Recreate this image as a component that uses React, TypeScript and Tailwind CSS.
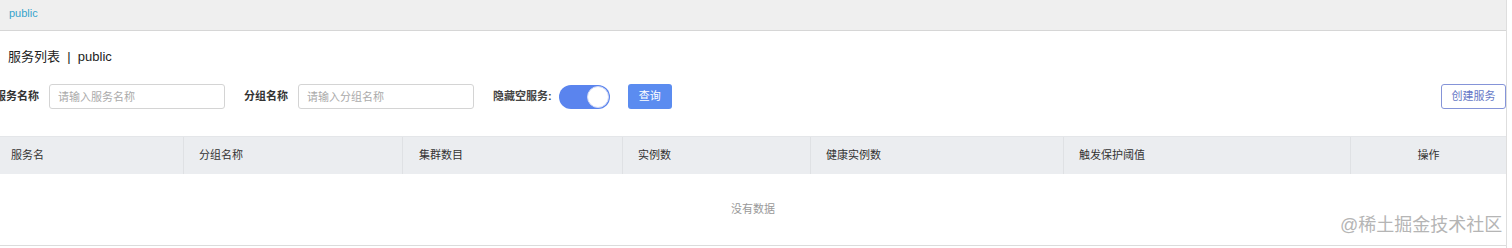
import React from "react";

const font = "font-['Liberation_Sans','Noto_Sans_CJK_SC',sans-serif]";

interface Column {
  title: string;
  width: string;
  center?: boolean;
}

const columns: Column[] = [
  { title: "服务名", width: "w-[183px] pl-[11px]" },
  { title: "分组名称", width: "w-[219px] pl-[15px]" },
  { title: "集群数目", width: "w-[220px] pl-[16px]" },
  { title: "实例数", width: "w-[188px] pl-[15px]" },
  { title: "健康实例数", width: "w-[253px] pl-[15px]" },
  { title: "触发保护阈值", width: "w-[287px] pl-[15px]" },
  { title: "操作", width: "flex-1 justify-center", center: true },
];

const FilterInput: React.FC<{ placeholder: string }> = ({ placeholder }) => (
  <input
    className="w-[176px] h-[25px] border border-[#d4d4d4] rounded-[3px] px-[8px] text-[11px] text-[#333] placeholder:text-[#aaa] outline-none"
    placeholder={placeholder}
  />
);

const App: React.FC = () => {
  return (
    <div className={`relative w-[1507px] h-[248px] bg-white border-r border-[#dedede] ${font}`}>
      <div className="h-[31px] bg-[#efefef] border-b border-[#d6d6d6] flex items-center pl-[9px] pb-[4px]">
        <span className="text-[11px] text-[#36a3cc]">public</span>
      </div>

      <div className="mt-[17px] h-[18px] leading-[18px] pl-[8px] text-[13px] text-[#222]">
        服务列表 &nbsp;|&nbsp; public
      </div>

      <div className="mt-[18px] h-[25px] flex items-center">
        <div className="w-[39px] flex justify-end shrink-0">
          <span className="text-[11px] font-semibold text-[#333] whitespace-nowrap">服务名称</span>
        </div>
        <div className="ml-[10px]">
          <FilterInput placeholder="请输入服务名称" />
        </div>
        <span className="ml-[19px] text-[11px] font-semibold text-[#333]">分组名称</span>
        <div className="ml-[10px]">
          <FilterInput placeholder="请输入分组名称" />
        </div>
        <span className="ml-[19px] text-[11px] font-semibold text-[#444]">隐藏空服务:</span>
        <div className="ml-[7px] w-[51px] h-[24px] rounded-full bg-[#5a84ee] flex items-center justify-end pr-[1px]">
          <div className="w-[22px] h-[22px] rounded-full bg-white border border-[#d0d8f5]" />
        </div>
        <button className="ml-[18px] w-[44px] h-[25px] rounded-[3px] bg-[#5b8cf0] text-white text-[11px]">
          查询
        </button>
        <button className="ml-auto w-[65px] h-[25px] rounded-[3px] border border-[#8594d8] text-[#6577c6] text-[11px] bg-white">
          创建服务
        </button>
      </div>

      <div className="mt-[27px]">
        <div className="h-[38px] bg-[#ebedf0] flex border-t border-[#e4e6e9]">
          {columns.map((c, i) => (
            <div
              key={c.title}
              className={`${c.width} flex items-center text-[11px] text-[#333] ${
                i > 0 ? "border-l border-[#dfe1e4]" : ""
              }`}
            >
              {c.title}
            </div>
          ))}
        </div>
        <div className="h-[72px] border-b border-[#dcdcdc] flex items-center justify-center">
          <span className="text-[11px] text-[#999]">没有数据</span>
        </div>
      </div>

      <div className="absolute left-[1340px] top-[213px] text-[18px] leading-[24px] text-[#b5b5b5] whitespace-nowrap">
        @稀土掘金技术社区
      </div>
    </div>
  );
};

export default App;
